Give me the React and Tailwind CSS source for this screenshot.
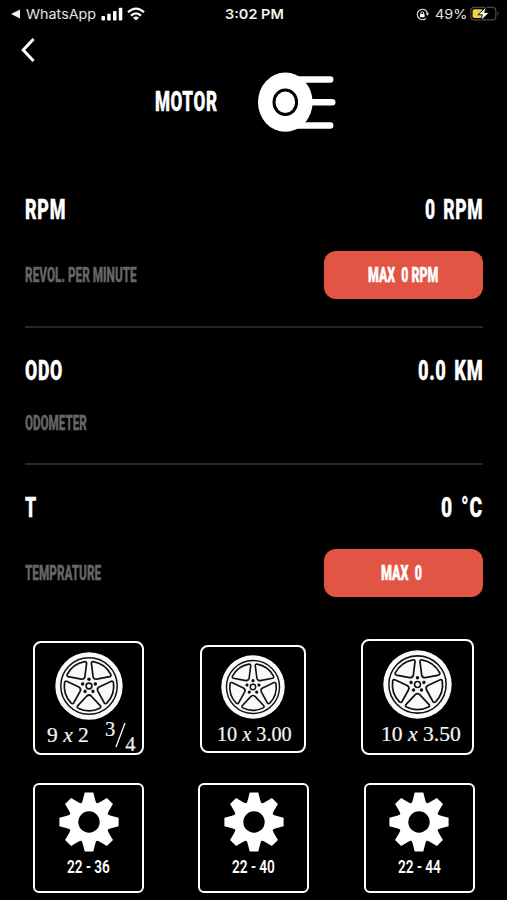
import { useLayoutEffect, useRef, useState } from 'react';

// Condenses a line of text horizontally so it takes exactly `width` pixels
const FitText = ({ width, className = '', children }) => {
  const ref = useRef(null);
  const [scale, setScale] = useState(1);

  useLayoutEffect(() => {
    const measure = () => setScale(width / ref.current.offsetWidth);
    measure();
    document.fonts?.ready.then(() => ref.current && measure());
  }, [width, children]);

  return (
    <span className="inline-flex shrink-0" style={{ width }}>
      <span
        ref={ref}
        className={`inline-block shrink-0 origin-left whitespace-pre ${className}`}
        style={{ transform: `scaleX(${scale})` }}
      >
        {children}
      </span>
    </span>
  );
};

const titleText =
  "font-['Roboto',sans-serif] text-[28px] leading-7 font-black tracking-[1px] [word-spacing:4px] text-white [-webkit-text-stroke:0.3px_#ffffff]";
const labelText =
  "font-['Roboto',sans-serif] text-[19.5px] leading-6 font-extrabold text-[#666666] [-webkit-text-stroke:0.4px_#666666]";
const badgeText =
  "font-['Roboto',sans-serif] text-[19.5px] leading-6 font-black text-white [-webkit-text-stroke:0.4px_#ffffff]";
const ratioText = "font-['Roboto',sans-serif] text-[19px] leading-6 font-semibold text-white";
const serifText =
  "font-['Liberation_Serif',serif] text-[20.5px] leading-6 text-[#f4f4f4] [-webkit-text-stroke:0.2px_#f4f4f4]";

const StatusBar = () => (
  <div className="grid h-7 grid-cols-3 items-center pl-[11px] pr-[7px] font-['Inter',sans-serif] text-[13.5px] leading-5 text-[#e4e4e4]">
    <div className="flex items-center">
      <svg width="9" height="10" viewBox="0 0 9 10" fill="#f2f2f2" className="mr-[6px]">
        <path d="M0 5 9 0.6V9.4Z" />
      </svg>
      <FitText width={70}>WhatsApp</FitText>
      <svg width="22" height="14" viewBox="0 0 22 14" fill="#ffffff" className="ml-[5px]">
        <rect x="0.5" y="9" width="3.5" height="4.5" rx="0.8" />
        <rect x="6.2" y="6.8" width="3.5" height="6.7" rx="0.8" />
        <rect x="12" y="4" width="3.5" height="9.5" rx="0.8" />
        <rect x="17.8" y="0.8" width="3.5" height="12.7" rx="0.8" />
      </svg>
      <svg width="18" height="14" viewBox="0 0 18 14" fill="none" stroke="#ffffff" strokeWidth="2.3" className="ml-[4px]">
        <path d="M1 5.2Q9 -1.9 17 5.2" />
        <path d="M4 8.6Q9 4.2 14 8.6" />
        <path d="M9 13.6 6 10.7Q9 8.4 12 10.7Z" fill="#ffffff" stroke="none" />
      </svg>
    </div>
    <div className="flex justify-center pr-[3px]">
      <FitText width={59} className="font-semibold text-[#f2f2f2]">3:02 PM</FitText>
    </div>
    <div className="flex items-center justify-end">
      <svg width="13" height="13" viewBox="0 0 13 13" fill="none" stroke="#e4e4e4" strokeWidth="1.3">
        <path d="M10 2.6A5.2 5.2 0 1 0 10 10.4" />
        <path d="M9.4 2.2A5.2 5.2 0 0 1 11.4 5.6" />
        <path d="M9.8 5.3H13L11.4 8Z" fill="#e4e4e4" stroke="none" />
        <rect x="4" y="5.9" width="4.6" height="3.4" rx="0.5" fill="#ffffff" stroke="none" />
        <path d="M5 6V5A1.3 1.3 0 0 1 7.6 5V6" strokeWidth="1" />
      </svg>
      <div className="ml-[6px] mr-[3px] flex">
        <FitText width={32}>49%</FitText>
      </div>
      <svg width="30" height="16" viewBox="0 0 30 16">
        <rect x="0.8" y="1.3" width="25" height="12.6" rx="3.5" fill="none" stroke="#4a4a4a" strokeWidth="1.2" />
        <path d="M27.4 5.4Q29.8 7.6 27.4 9.8Z" fill="#4a4a4a" />
        <rect x="2.6" y="3.2" width="10.5" height="8.9" rx="1.8" fill="#f0d24c" />
        <path d="M16.6 0.6 7.8 8.8H12.4L10.6 14.8 19.4 6.4H14.6Z" fill="#ffffff" stroke="#000000" strokeWidth="0.9" />
      </svg>
    </div>
  </div>
);

const MotorIcon = () => (
  <svg width="80" height="60" viewBox="0 0 80 60" className="ml-[39px]">
    <g stroke="#ffffff" strokeWidth="6.5" strokeLinecap="round">
      <path d="M31 7.4H73.2" />
      <path d="M50 30.2H75.2" />
      <path d="M31 53.4H73.2" />
    </g>
    <ellipse cx="28.3" cy="30.2" rx="27.3" ry="29.6" fill="#ffffff" />
    <ellipse cx="28.3" cy="30.2" rx="11.3" ry="12.3" fill="none" stroke="#000000" strokeWidth="3" />
  </svg>
);

const Wheel = ({ size }) => (
  <svg width={size} height={size} viewBox="-34 -34 68 68" className="shrink-0">
    <circle r="33.7" fill="#fafafa" />
    <circle r="28.2" fill="none" stroke="#111111" strokeWidth="1.5" />
    {[0, 72, 144, 216, 288].map((angle) => (
      <g key={angle} transform={`rotate(${angle})`}>
        <path
          d="M-2.2 10Q0 8 2.2 10L11.4 19.8Q12.4 21.3 10.8 22.2A24.6 24.6 0 0 1 -10.8 22.2Q-12.4 21.3 -11.4 19.8Z"
          fill="none"
          stroke="#111111"
          strokeWidth="1.7"
        />
        <circle cy="-6.7" r="1.7" fill="#111111" />
      </g>
    ))}
    <circle r="2.9" fill="none" stroke="#111111" strokeWidth="1.6" />
  </svg>
);

const Gear = () => (
  <svg width="60" height="60" viewBox="-30 -30 60 60" fill="#ffffff" className="shrink-0">
    {[0, 45, 90, 135, 180, 225, 270, 315].map((angle) => (
      <path
        key={angle}
        transform={`rotate(${angle})`}
        d="M-8.2 -17.8Q-6.6 -20 -6.2 -22L-4.3 -29.6H4.3L6.2 -22Q6.6 -20 8.2 -17.8Z"
      />
    ))}
    <circle r="19.8" />
    <circle r="10.7" fill="#000000" />
  </svg>
);

const MaxButton = ({ width, children, className = '' }) => (
  <button className={`flex h-12 w-[159px] items-center justify-center rounded-xl bg-[#e25544] ${className}`}>
    <FitText width={width} className={badgeText}>{children}</FitText>
  </button>
);

const Divider = () => <div className="h-[2px] bg-[#262626]" />;

const gears = ['22 - 36', '22 - 40', '22 - 44'];

const App = () => {
  return (
    <div className="h-[900px] w-[507px] overflow-hidden bg-black">
      <StatusBar />

      <div className="flex h-11 items-start pl-[20px] pt-[9px]">
        <svg width="16" height="26" viewBox="0 0 16 26" fill="none" stroke="#ffffff" strokeWidth="3">
          <path d="M13.6 2 3.2 13 13.6 24" />
        </svg>
      </div>

      <div className="flex h-[60px] items-center pl-[155px]">
        <FitText width={63} className={titleText}>MOTOR</FitText>
        <MotorIcon />
      </div>

      <div className="pl-[25px] pr-[24px] pt-[64px]">
        <div className="flex h-7 items-center justify-between">
          <FitText width={41} className={titleText}>RPM</FitText>
          <FitText width={58} className={titleText}>0 RPM</FitText>
        </div>
        <div className="mt-[27px] flex h-12 items-center justify-between">
          <div className="flex pt-[2px]">
            <FitText width={112} className={labelText}>REVOL. PER MINUTE</FitText>
          </div>
          <MaxButton width={70} className="pr-[2px] pt-[1px]">MAX  0 RPM</MaxButton>
        </div>
        <div className="mt-[27px]">
          <Divider />
        </div>

        <div className="mt-[29px] flex h-7 items-center justify-between">
          <FitText width={38} className={titleText}>ODO</FitText>
          <FitText width={65} className={titleText}>0.0 KM</FitText>
        </div>
        <div className="mb-[27px] mt-[27px] flex h-6 items-center">
          <FitText width={62} className={labelText}>ODOMETER</FitText>
        </div>
        <Divider />

        <div className="mt-[29px] flex h-7 items-center justify-between">
          <FitText width={12} className={titleText}>T</FitText>
          <FitText width={42} className={titleText}>0 °C</FitText>
        </div>
        <div className="mt-[27px] flex h-12 items-center justify-between">
          <div className="flex pt-[2px]">
            <FitText width={76} className={labelText}>TEMPRATURE</FitText>
          </div>
          <MaxButton width={41} className="pr-[4px] pt-[1px]">MAX  0</MaxButton>
        </div>
      </div>

      <div className="mt-[42px] flex h-[116px] items-start pl-[33px]">
        <div className="mt-[2px] flex h-[114px] w-[111px] flex-col items-center rounded-lg border-2 border-white pt-[9px]">
          <Wheel size={68} />
          <div className="flex w-full items-start pl-[12px]">
            <FitText width={42} className={`${serifText} mt-[3px]`}>
              9 <i>x</i> 2
            </FitText>
            <span className={`${serifText} ml-[16px] -mt-[3px]`}>3</span>
            <svg width="11" height="26" viewBox="0 0 11 26" stroke="#ffffff" strokeWidth="1.3" className="mt-[2px]">
              <path d="M10 1 1 25" />
            </svg>
            <span className={`${serifText} -ml-[1px] mt-[12px]`}>4</span>
          </div>
        </div>

        <div className="ml-[56px] mt-[6px] flex h-[108px] w-[106px] flex-col items-center rounded-lg border-2 border-white pt-[8px]">
          <Wheel size={64} />
          <div className="mt-[3px] pl-[3px]">
            <FitText width={75} className={serifText}>
              10 <i>x</i> 3.00
            </FitText>
          </div>
        </div>

        <div className="ml-[55px] flex h-[116px] w-[113px] flex-col items-center rounded-lg border-2 border-white pt-[9px]">
          <Wheel size={69} />
          <div className="mt-[3px] pl-[7px]">
            <FitText width={80} className={serifText}>
              10 <i>x</i> 3.50
            </FitText>
          </div>
        </div>
      </div>

      <div className="mt-[28px] flex gap-[54.4px] pl-[33px]">
        {gears.map((ratio) => (
          <div
            key={ratio}
            className="flex h-[110px] w-[111px] flex-col items-center rounded-md border-2 border-white pt-[7px]"
          >
            <Gear />
            <div className="mt-[3px] flex">
              <FitText width={43} className={ratioText}>{ratio}</FitText>
            </div>
          </div>
        ))}
      </div>
    </div>
  );
};

export default App;
